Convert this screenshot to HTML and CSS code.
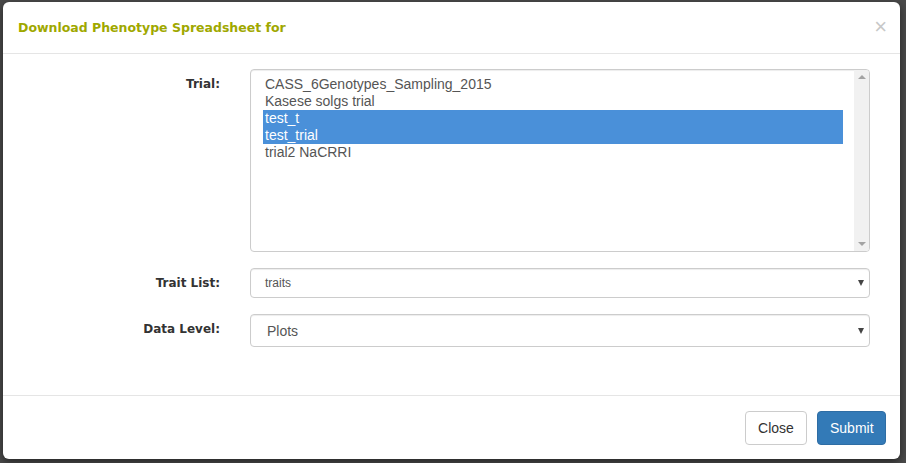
FILE: index.html
```html
<!DOCTYPE html>
<html>
<head>
<meta charset="utf-8">
<link rel="stylesheet" href="styles.css">
</head>
<body>
<div class="modal">
  <div class="modal-header">
    <h4 class="modal-title">Download Phenotype Spreadsheet for</h4>
    <span class="close">&times;</span>
  </div>
  <div class="modal-body">
    <div class="form-grid">
      <label class="form-label label-trial">Trial:</label>
      <div class="listbox">
        <div class="options">
          <div class="option">CASS_6Genotypes_Sampling_2015</div>
          <div class="option">Kasese solgs trial</div>
          <div class="option selected">test_t</div>
          <div class="option selected">test_trial</div>
          <div class="option">trial2 NaCRRI</div>
        </div>
        <div class="scrollbar">
          <span class="arrow-up"></span>
          <span class="arrow-down"></span>
        </div>
      </div>
      <label class="form-label">Trait List:</label>
      <div class="select select-small"><span>traits</span><span class="caret"></span></div>
      <label class="form-label">Data Level:</label>
      <div class="select select-large"><span>Plots</span><span class="caret"></span></div>
    </div>
  </div>
  <div class="modal-footer">
    <button class="btn btn-default">Close</button>
    <button class="btn btn-primary">Submit</button>
  </div>
</div>
</body>
</html>
```

FILE: styles.css
```css
html, body {
  margin: 0;
  padding: 0;
  background: #4a4a4a;
  height: 463px;
  overflow: hidden;
}
body {
  padding: 2px 6px 0 3px;
  box-sizing: border-box;
  font-family: "Liberation Sans", Arial, sans-serif;
}
.modal {
  width: 897px;
  height: 457px;
  background: #fff;
  border-radius: 6px;
  display: flex;
  flex-direction: column;
  box-shadow: 0 3px 9px rgba(0,0,0,0.5);
}
.modal-header {
  height: 52px;
  box-sizing: border-box;
  padding: 17px 15px 0 15px;
  border-bottom: 1px solid #e5e5e5;
  display: flex;
  justify-content: space-between;
  align-items: flex-start;
}
.modal-title {
  margin: 0;
  font-family: "DejaVu Sans", sans-serif;
  font-weight: 700;
  font-size: 12.5px;
  line-height: 18px;
  color: #9fa800;
}
.close {
  font-family: "Liberation Sans", Arial, sans-serif;
  font-size: 22px;
  line-height: 20px;
  font-weight: 400;
  color: #c8c8c8;
  margin-right: -2px;
  margin-top: -2px;
}
.modal-body {
  flex: 1;
  padding: 15px 15px 0 15px;
}
.form-grid {
  display: grid;
  grid-template-columns: 202px 620px;
  column-gap: 30px;
  row-gap: 16px;
}
.form-label {
  text-align: right;
  font-family: "DejaVu Sans", sans-serif;
  font-weight: 700;
  font-size: 12px;
  color: #333;
  padding-top: 7px;
  line-height: 16px;
}
.listbox {
  height: 183px;
  box-sizing: border-box;
  border: 1px solid #ccc;
  border-radius: 4px;
  display: flex;
  box-shadow: inset 0 1px 1px rgba(0,0,0,0.075);
}
.options {
  flex: 1;
  padding: 6px 11px 0 12px;
}
.option {
  height: 17px;
  line-height: 17px;
  font-size: 14px;
  color: #555;
  padding-left: 2px;
}
.option.selected {
  background: #4a90d9;
  color: #fff;
}
.scrollbar {
  width: 15px;
  background: #f1f1f1;
  border-radius: 0 3px 3px 0;
  position: relative;
}
.arrow-up, .arrow-down {
  position: absolute;
  left: 4px;
  width: 0;
  height: 0;
  border-left: 4px solid transparent;
  border-right: 4px solid transparent;
}
.arrow-up {
  top: 5px;
  border-bottom: 4px solid #a3a3a3;
}
.arrow-down {
  bottom: 5px;
  border-top: 4px solid #a3a3a3;
}
.select {
  box-sizing: border-box;
  border: 1px solid #ccc;
  border-radius: 4px;
  display: flex;
  align-items: center;
  justify-content: space-between;
  color: #555;
  box-shadow: inset 0 1px 1px rgba(0,0,0,0.075);
}
.select-small {
  height: 30px;
  padding: 0 5px 0 14px;
  font-size: 12px;
}
.select-large {
  height: 33px;
  padding: 0 5px 0 16px;
  font-size: 14px;
}
.caret {
  width: 0;
  height: 0;
  border-left: 3.5px solid transparent;
  border-right: 3.5px solid transparent;
  border-top: 6px solid #444;
}
.modal-footer {
  height: 64px;
  box-sizing: border-box;
  border-top: 1px solid #e5e5e5;
  padding: 15px 14px 0 15px;
  display: flex;
  justify-content: flex-end;
  align-items: flex-start;
  gap: 10px;
}
.btn {
  font-family: "Liberation Sans", Arial, sans-serif;
  font-size: 14px;
  height: 34px;
  padding: 0 12px;
  border-radius: 4px;
  border: 1px solid transparent;
  cursor: pointer;
}
.btn-default {
  background: #fff;
  border-color: #ccc;
  color: #333;
  width: 62px;
}
.btn-primary {
  background: #337ab7;
  border-color: #2e6da4;
  color: #fff;
  width: 69px;
}
```
